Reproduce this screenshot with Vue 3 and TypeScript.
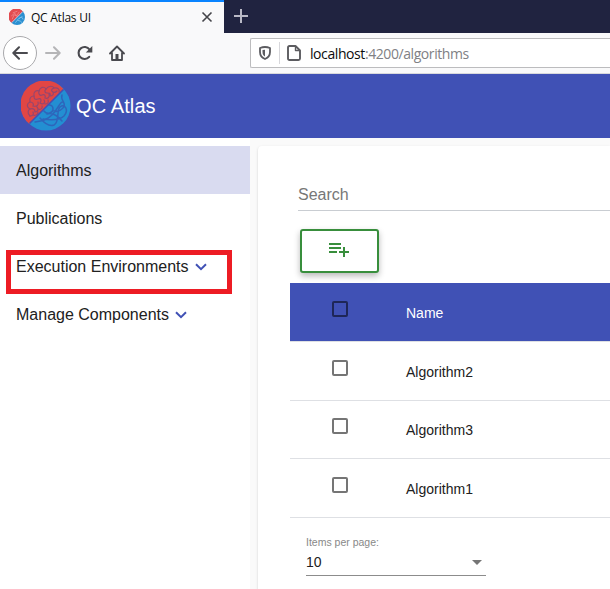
<script setup lang="ts">
import { ref } from 'vue'

interface NavItem {
  label: string
  expandable: boolean
}

const navItems: NavItem[] = [
  { label: 'Algorithms', expandable: false },
  { label: 'Publications', expandable: false },
  { label: 'Execution Environments', expandable: true },
  { label: 'Manage Components', expandable: true },
]
const active = ref('Algorithms')
const highlighted = 'Execution Environments'
const rows = ref<string[]>(['Algorithm2', 'Algorithm3', 'Algorithm1'])
const pageSize = ref(10)
</script>

<template>
  <div class="window">
    <div class="tabbar">
      <div class="tab">
        <svg class="favicon" viewBox="0 0 50 50">
          <circle cx="25" cy="25" r="25" fill="#2a8fd0" />
          <path d="M8 43A25 25 0 1 1 43 8Z" fill="#e34b50" />
          <path d="M10 32l6-14 8 4 8-13M7 22l11-9 7 10M12 12l14-5" fill="none" stroke="#f08a8c" stroke-width="2.5" />
          <path d="M20 43q10-18 22-19M26 35q12 2 15 8M32 30q9-10 12 3" fill="none" stroke="#8cc8ee" stroke-width="2.5" />
          <path d="M8 43L43 8" stroke="#e6cfe0" stroke-width="2.5" />
        </svg>
        <span class="tab-title">QC Atlas UI</span>
        <svg class="tab-close" viewBox="0 0 12 12"><path d="M1.5 1.5l9 9M10.5 1.5l-9 9" stroke="#45454a" stroke-width="1.6" /></svg>
      </div>
      <svg class="tab-new" viewBox="0 0 14 14"><path d="M7 0v14M0 7h14" stroke="#b9b9c6" stroke-width="2" /></svg>
    </div>

    <div class="toolbar">
      <span class="back">
        <svg width="16" height="14" viewBox="0 0 16 14" fill="none" stroke="#4a4a4f" stroke-width="2" stroke-linecap="round" stroke-linejoin="round"><path d="M15 7H1.5M7 1.2L1.3 7L7 12.8" /></svg>
      </span>
      <svg class="forward" width="16" height="14" viewBox="0 0 16 14" fill="none" stroke="#b5b5b7" stroke-width="2" stroke-linecap="round" stroke-linejoin="round"><path d="M1 7h13.5M9 1.2L14.7 7L9 12.8" /></svg>
      <svg class="reload" width="16" height="16" viewBox="0 0 16 16"><path d="M12.2 11.8A6 6 0 1 1 12.5 4.5" fill="none" stroke="#4a4a4f" stroke-width="2.1" stroke-linecap="round" /><path d="M15.3 1v6.5H8.8Z" fill="#4a4a4f" /></svg>
      <svg class="home" width="16" height="16" viewBox="0 0 16 16" fill="none" stroke="#4a4a4f" stroke-width="1.8" stroke-linecap="round" stroke-linejoin="round"><path d="M1 8.500L8 1.500l7 7M3 8v7h10V8" /><path d="M6.500 9h3v5.500h-3Z" fill="#4a4a4f" stroke="none" /></svg>
      <div class="urlbar">
        <svg class="shield" width="12" height="14" viewBox="0 0 12 14"><path d="M6 1C8 1 9.5 1.4 11 2v4c0 3.500-2 5.800-5 7C3 11.800 1 9.500 1 6V2C2.500 1.400 4 1 6 1Z" fill="none" stroke="#5c5c60" stroke-width="1.800" stroke-linejoin="round" /><path d="M6 3.700V10.500C4.300 9.500 3.500 8 3.500 6V4Z" fill="#5c5c60" /></svg>
        <span class="divider"></span>
        <svg class="page" width="14" height="16" viewBox="0 0 14 16" fill="none" stroke="#5c5c60" stroke-width="1.9" stroke-linejoin="round"><path d="M2.500 1H8.500L13 5.500V13.500Q13 15 11.500 15H2.500Q1 15 1 13.500V2.500Q1 1 2.500 1Z" /><path d="M8.500 1V5.500H13" stroke-width="1.400" /></svg>
        <span class="url"><b>localhost</b>:4200/algorithms</span>
      </div>
    </div>

    <header class="header">
      <svg class="logo" viewBox="0 0 50 50">
        <circle cx="25" cy="25" r="24.500" fill="#238fd2" />
        <path d="M8.500 43A24.500 24.500 0 1 1 42.500 8Z" fill="#e14644" />
        <g fill="none" stroke="#94476f" stroke-width="1.200" stroke-linecap="round">
          <path d="M9 35c-3-3-2-6 0-7-4-2-3-6 0-7-1-4 1-6 4-6-1-4 2-6 5-5 1-4 5-5 7-2 3-4 7-3 8-1 4-1 6 2 5 4" />
          <path d="M9 35c3 0 4-2 3-4M9 28c3-1 5 0 5 3 3 0 4-3 2-5M9 21c3 0 4 2 3 4 4 1 6-1 5-4M13 15c0 3 1 4 4 3s4 1 2 4c3 2 6 0 4-3M18 10c-1 3 1 5 3 4s4 0 3 3c3 1 5-1 4-4M25 8c-2 2-1 4 1 4s4 0 3 3c3 0 4-2 3-4M33 7c-3 1-3 3-1 4s3 0 4-1M12 34c3 1 5-1 5-3M17 28c3 1 5-1 4-3M24 23c3 0 4-2 3-4" />
        </g>
        <g fill="none" stroke="#2e65bb" stroke-width="1.500" stroke-linecap="round">
          <path d="M14 41c7-1 12-2 17-7 6-6 8-14 11-13 4 3-2 11-9 9M19 37c5 6 9 9 14 7 6-3 2-14 6-18 5-4 9 3 4 9-5 5-14 4-21 3M41 14c-2 5 4 7 2 12M23 30c3 4 9 2 9-2 0-3-2-4-4-4M26 33c6-2 12 3 15 7" />
        </g>
        <path d="M8.500 42.500L42.500 8.500" stroke="#4051b5" stroke-width="1.600" />
      </svg>
      <span class="brand">QC Atlas</span>
    </header>

    <div class="body">
      <nav class="sidebar">
        <a v-for="item in navItems" :key="item.label" class="nav-item" :class="{ active: item.label === active }" @click="active = item.label">
          <span>{{ item.label }}</span>
          <svg v-if="item.expandable" class="chevron" width="12" height="8" viewBox="0 0 12 8"><path d="M1 1.300L6 6.100L11 1.300" fill="none" stroke="#4051b5" stroke-width="2" /></svg>
          <span v-if="item.label === highlighted" class="highlight"></span>
        </a>
      </nav>

      <main class="content">
        <section class="card">
          <div class="search">Search</div>
          <button class="add" aria-label="Add">
            <svg width="24" height="24" viewBox="0 0 24 24"><path d="M14 10H2v2h12v-2zm0-4H2v2h12V6zm4 8v-4h-2v4h-4v2h4v4h2v-4h4v-2h-4zM2 16h8v-2H2v2z" fill="#388e3c" /></svg>
          </button>
          <div class="table">
            <div class="row head"><span class="check"></span><span class="name">Name</span></div>
            <div v-for="row in rows" :key="row" class="row"><span class="check"></span><span class="name">{{ row }}</span></div>
          </div>
          <div class="paginator">
            <div class="page-label">Items per page:</div>
            <div class="select"><span>{{ pageSize }}</span><span class="arrow"></span></div>
          </div>
        </section>
      </main>
    </div>
  </div>
</template>

<style>
body { margin: 0; overflow: hidden; }
</style>

<style scoped>
* { box-sizing: border-box; }
.window { width: 610px; height: 589px; overflow: hidden; display: flex; flex-direction: column; background: #fafafa; font-family: "Liberation Sans", Arial, sans-serif; color: #212121; }
svg { display: block; flex: none; }
.tabbar { display: flex; height: 33px; flex: none; background: #202340; }
.tab { display: flex; align-items: center; width: 224px; height: 33px; padding: 0 11px 0 9px; background: #f9f9fa; border-top: 2px solid #0a84ff; }
.favicon { width: 16px; height: 16px; margin-top: -1px; }
.tab-title { margin-left: 6px; font: 12px/16px "Open Sans", "Noto Sans", sans-serif; letter-spacing: -0.25px; color: #0c0c0d; flex: 1; }
.tab-close { width: 12px; height: 12px; margin-top: -1px; }
.tab-new { width: 14px; height: 14px; margin: 9px 0 0 10px; }
.toolbar { display: flex; align-items: center; height: 41px; flex: none; padding-left: 3px; background: #f9f9fa; border-bottom: 1px solid #d9d9dc; }
.back { display: flex; align-items: center; justify-content: center; width: 34px; height: 34px; border: 1px solid #a9a9ac; border-radius: 50%; background: #fff; flex: none; }
.forward { margin-left: 8px; }
.reload { margin-left: 16px; }
.home { margin-left: 16px; }
.urlbar { display: flex; align-items: center; flex: 1; height: 30px; margin-left: 125px; padding-left: 8px; background: #fff; border: 1px solid #bcbcbe; border-right: 0; border-radius: 2px 0 0 2px; }
.divider { width: 1px; height: 22px; margin: 0 7px 0 8px; background: #d7d7db; }
.url { margin-left: 9px; padding-top: 2px; font: 14px/20px "Open Sans", "Noto Sans", sans-serif; letter-spacing: -0.42px; color: #808084; white-space: nowrap; }
.url b { font-weight: 400; color: #0c0c0d; }
.header { display: flex; align-items: center; height: 64px; flex: none; padding-left: 21px; background: #4051b5; color: #fff; }
.logo { width: 50px; height: 50px; }
.brand { margin-left: 5px; font-size: 20px; line-height: 24px; letter-spacing: .1px; }
.body { display: flex; flex: 1; min-height: 0; }
.sidebar { width: 250px; flex: none; padding-top: 8px; background: #fff; }
.nav-item { position: relative; display: flex; align-items: center; height: 48px; padding: 2px 0 0 16px; font-size: 16px; cursor: pointer; }
.nav-item.active { background: #d9dbf0; }
.chevron { margin: -1px 0 0 6px; }
.highlight { position: absolute; left: 6px; top: 8px; width: 226px; height: 44px; border: 5px solid #ed1c24; }
.content { flex: 1; min-width: 0; padding: 8px 0 0 8px; }
.card { display: flex; flex-direction: column; height: 500px; padding: 33px 0 0 32px; background: #fff; border-radius: 4px 0 0 0; box-shadow: 0 2px 1px -1px rgba(0,0,0,.2), 0 1px 1px rgba(0,0,0,.14), 0 1px 3px rgba(0,0,0,.12); }
.search { height: 32px; margin-left: 8px; border-bottom: 1px solid #c9cdd2; font-size: 16px; line-height: 31px; color: #777; }
.add { display: flex; align-items: center; justify-content: center; width: 79px; height: 44px; margin: 18px 0 10px 10px; padding: 0 1px 4px 0; background: #fff; border: 2px solid #388e3c; border-radius: 3px; box-shadow: 0 3px 6px rgba(0,0,0,.28); }
.row { display: flex; height: 59px; padding-left: 42px; border-bottom: 1px solid #dee0e4; font-size: 14px; }
.row:nth-child(3) { height: 58px; }
.head { background: #4051b5; background-clip: padding-box; color: #fff; }
.check { width: 16px; height: 16px; margin-top: 18px; flex: none; border: 2px solid #757575; border-radius: 2px; }
.row:nth-child(3) .check { margin-top: 17px; }
.head .check { border-color: #1e2657; }
.name { margin-left: 58px; align-self: center; padding-top: 2px; }
.row:nth-child(3) .name { padding-top: 1px; }
.paginator { width: 180px; margin: 17px 0 0 16px; }
.page-label { font-size: 10.500px; line-height: 14px; color: #888; }
.select { display: flex; align-items: center; justify-content: space-between; height: 27px; padding: 0 4px 0 0; border-bottom: 1px solid #8c8c8c; font-size: 14px; }
.arrow { border: 5px solid transparent; border-top-color: #757575; border-bottom: 0; }
</style>
